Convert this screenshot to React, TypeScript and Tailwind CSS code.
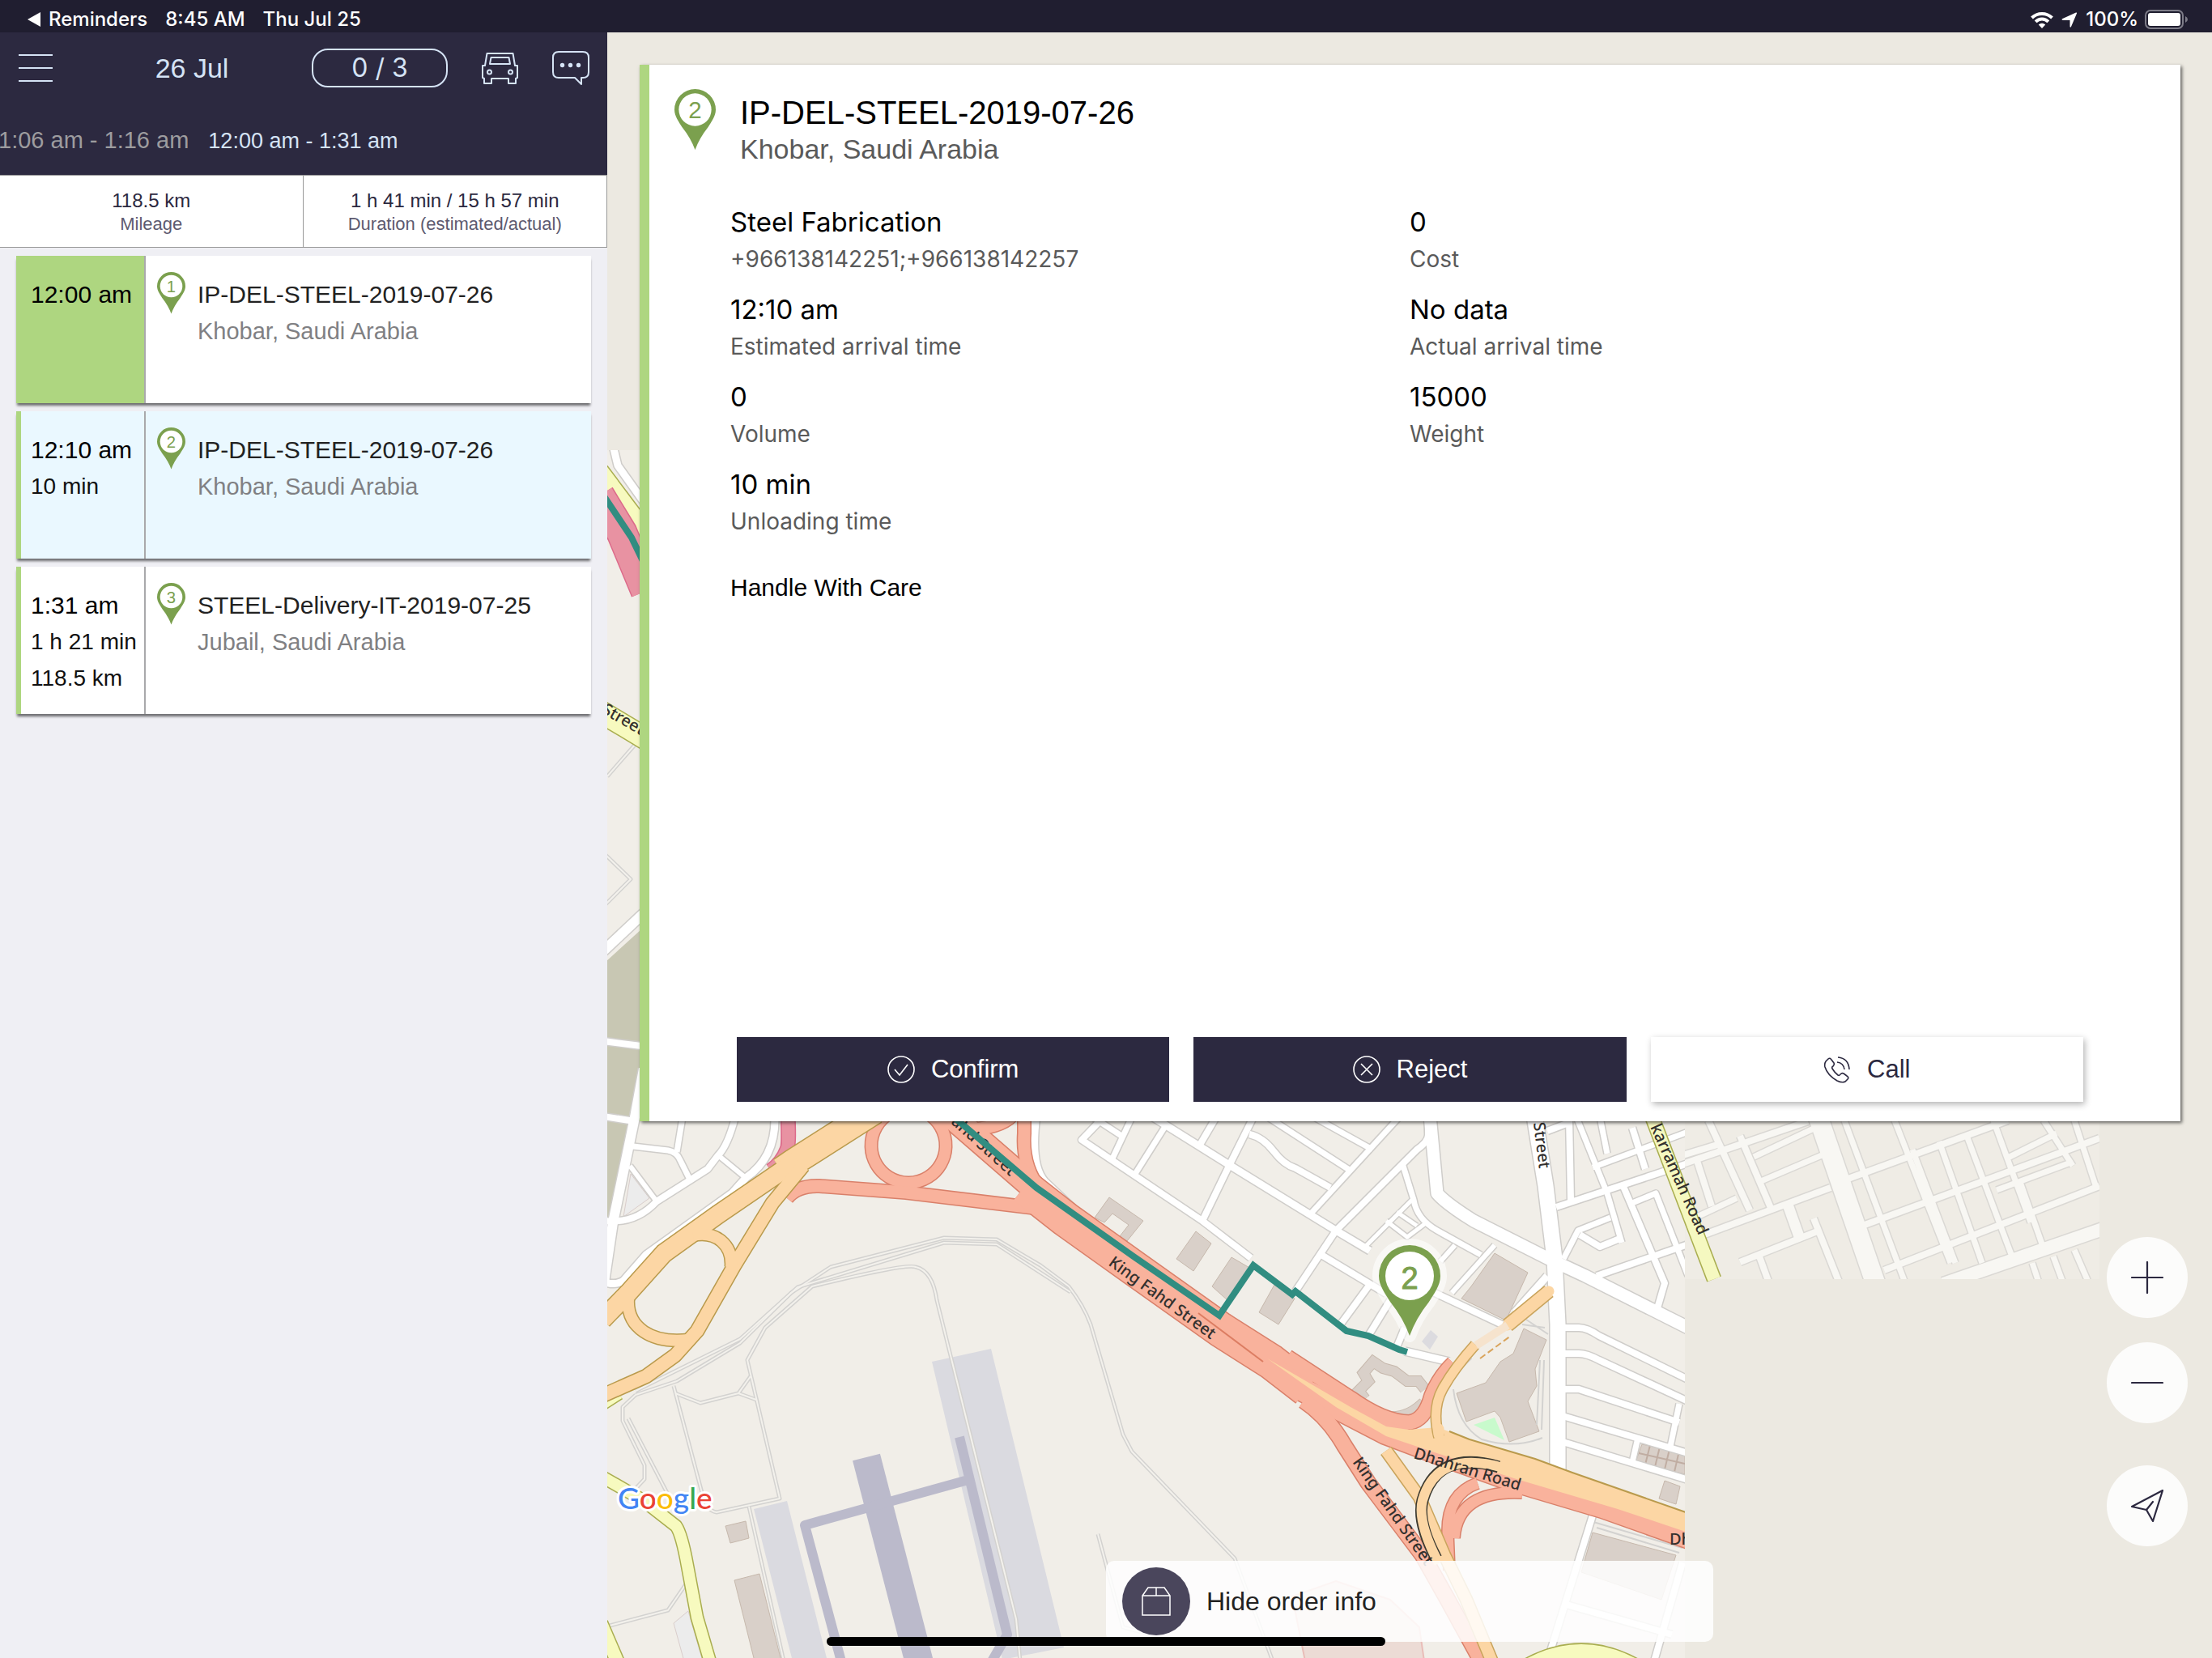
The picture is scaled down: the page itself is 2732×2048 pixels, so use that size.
import type { ReactNode } from "react";

type Stop = {
  id: number;
  time: string;
  extra: string[];
  title: string;
  place: string;
  tone: "start" | "active" | "plain";
};

const stops: Stop[] = [
  {
    id: 1,
    time: "12:00 am",
    extra: [],
    title: "IP-DEL-STEEL-2019-07-26",
    place: "Khobar, Saudi Arabia",
    tone: "start",
  },
  {
    id: 2,
    time: "12:10 am",
    extra: ["10 min"],
    title: "IP-DEL-STEEL-2019-07-26",
    place: "Khobar, Saudi Arabia",
    tone: "active",
  },
  {
    id: 3,
    time: "1:31 am",
    extra: ["1 h 21 min", "118.5 km"],
    title: "STEEL-Delivery-IT-2019-07-25",
    place: "Jubail, Saudi Arabia",
    tone: "plain",
  },
];

const details = [
  { value: "Steel Fabrication", label: "+966138142251;+966138142257" },
  { value: "0", label: "Cost" },
  { value: "12:10 am", label: "Estimated arrival time" },
  { value: "No data", label: "Actual arrival time" },
  { value: "0", label: "Volume" },
  { value: "15000", label: "Weight" },
  { value: "10 min", label: "Unloading time" },
];

export default function App() {
  return (
    <div className="min-h-screen flex flex-col bg-[#efeff4] font-['Liberation_Sans',Arial,sans-serif] text-black">
      <StatusBar />
      <div className="flex flex-1">
        <Sidebar />
        <main className="relative flex flex-1 flex-col overflow-hidden bg-[#ece9e1] pl-10 pr-[39px] pt-10">
          <MapCanvas />
          <OrderCard />
          <div className="flex-[33]" />
          <MapControls />
          <button className="absolute bottom-5 left-1/2 flex h-[100px] w-[750px] -translate-x-1/2 items-center gap-5 rounded-[10px] bg-white/85 px-5 text-[32px] text-[#222]">
            <span className="flex h-[84px] w-[84px] items-center justify-center rounded-full bg-[#4a465c]">
              <BoxIcon />
            </span>
            Hide order info
          </button>
        </main>
      </div>
      {/* Home indicator */}
      <div className="fixed bottom-[15px] left-1/2 h-[11px] w-[690px] -translate-x-1/2 rounded-full bg-black" />
    </div>
  );
}

function StatusBar() {
  return (
    <header className="flex h-10 items-center justify-between bg-[#201e30] pl-[34px] pr-[30px] pt-2 font-[Inter,sans-serif] text-[24px] leading-8 font-medium text-white">
      <div className="flex items-center gap-[22px]">
        <a href="#reminders" className="flex items-center gap-2.5">
          <svg width="16" height="18" viewBox="0 0 16 18" fill="currentColor">
            <path d="M0 9 16 0v18z" />
          </svg>
          Reminders
        </a>
        <span>8:45 AM</span>
        <span>Thu Jul 25</span>
      </div>
      <div className="flex items-center">
        <svg width="28" height="21" viewBox="0 0 28 21" fill="none" stroke="currentColor" strokeWidth="4">
          <path d="M1.500 8a18 18 0 0 1 25 0" />
          <path d="M6.200 12.800a11 11 0 0 1 15.600 0" />
          <path d="M14 21l-4.200-4.500a6 6 0 0 1 8.400 0z" fill="currentColor" stroke="none" />
        </svg>
        <svg className="ml-2.5" width="20" height="19" viewBox="0 0 20 19" fill="currentColor">
          <path d="M1 8.200 18 .6q1.400-.4 1 1L12 18q-1 1.400-1.500-.2V10H2Q-.5 9.500 1 8.200z" />
        </svg>
        <span className="ml-2.5">100%</span>
        <svg className="ml-2" width="53" height="25" viewBox="0 0 53 25" fill="none">
          <rect x="1" y="1" width="46" height="22" rx="6" stroke="#7d7c88" strokeWidth="2" />
          <rect x="4" y="4" width="40" height="16" rx="3" fill="white" />
          <path d="M50 8q3 1.500 3 4t-3 4z" fill="#7d7c88" />
        </svg>
      </div>
    </header>
  );
}

function Sidebar() {
  return (
    <aside className="w-[750px] shrink-0">
      <div className="bg-[#2c2940] text-[#d5e3f5]">
        <div className="flex h-[88px] items-center pl-[23px] pr-[22px]">
          <button aria-label="Menu">
            <svg width="42" height="34" viewBox="0 0 42 34" stroke="currentColor" strokeWidth="2">
              <path d="M0 1h42M0 17h42M0 33h42" />
            </svg>
          </button>
          <h1 className="ml-6 flex-1 text-center text-[34px]">26 Jul</h1>
          <button className="h-12 w-[168px] rounded-[20px] border-2 border-current font-[Inter,sans-serif] text-[32px] leading-none">
            0 / 3
          </button>
          <button aria-label="Vehicle" className="ml-[42px]">
            <svg width="45" height="39" viewBox="0 0 45 39" fill="none" stroke="currentColor" strokeWidth="2" strokeLinejoin="round">
              <path d="M6.500 1h32l2.500 15h3v15l-2 1v6h-9v-6h-21v6H3v-6l-2-1V16h3z" />
              <path d="M11.500 6h22l1.500 8H10z" />
              <circle cx="9.500" cy="24" r="2.500" />
              <circle cx="35.500" cy="24" r="2.500" />
            </svg>
          </button>
          <button aria-label="Messages" className="ml-[42px]">
            <svg width="46" height="42" viewBox="0 0 46 42" fill="none" stroke="currentColor" strokeWidth="2" strokeLinejoin="round">
              <path d="M8 1h30q7 0 7 7v18q0 7-7 7h-2v8l-8-8H8q-7 0-7-7V8q0-7 7-7z" />
              <g fill="currentColor" stroke="none">
                <circle cx="12.500" cy="17.500" r="2.700" />
                <circle cx="22.500" cy="17.500" r="2.700" />
                <circle cx="32.500" cy="17.500" r="2.700" />
              </g>
            </svg>
          </button>
        </div>
        <nav className="flex h-[88px] items-center gap-6 overflow-hidden whitespace-nowrap pt-1">
          <button className="-ml-0.5 text-[29px] text-[#9d9c9f]">1:06 am - 1:16 am</button>
          <button className="text-[27px]">12:00 am - 1:31 am</button>
        </nav>
      </div>

      <dl className="grid h-[90px] grid-cols-2 divide-x divide-[#999] border-y border-r border-[#999] bg-white text-center text-[#2c2940]">
        <Stat value="118.5 km" label="Mileage" />
        <Stat value="1 h 41 min / 15 h 57 min" label="Duration (estimated/actual)" />
      </dl>

      <ol className="flex flex-col gap-2.5 px-5 pt-2.5">
        {stops.map((stop) => (
          <StopCard key={stop.id} stop={stop} />
        ))}
      </ol>
    </aside>
  );
}

function Stat({ value, label }: { value: string; label: string }) {
  return (
    <div className="flex flex-col-reverse justify-center pt-0.5">
      <dt className="text-[22px] leading-7 text-[#5d5a70]">{label}</dt>
      <dd className="text-[24px] leading-[30px]">{value}</dd>
    </div>
  );
}

const tones = {
  start: { card: "bg-white", time: "bg-[#aed680]" },
  active: { card: "bg-[#eaf8ff]", time: "" },
  plain: { card: "bg-white", time: "" },
};

function StopCard({ stop }: { stop: Stop }) {
  const tone = tones[stop.tone];
  return (
    <li>
      <button
        className={`flex h-[182px] w-full border-l-6 border-[#aed680] text-left shadow-[0_4px_3px_-1px_rgba(0,0,0,0.55)] ${tone.card}`}
      >
        <div className={`h-full w-[154px] border-r-2 border-[#a9a9ab] pl-3 pt-[26px] whitespace-nowrap ${tone.time}`}>
          <p className="text-[30px] leading-[44px]">{stop.time}</p>
          {stop.extra.map((line) => (
            <p key={line} className="text-[28px] leading-[45px] text-[#111]">
              {line}
            </p>
          ))}
        </div>
        <div className="flex gap-[15px] pl-[14px] pt-5">
          <Pin n={stop.id} className="w-[35px]" />
          <div className="pt-1.5">
            <p className="text-[30px] leading-[44px] text-[#222]">{stop.title}</p>
            <p className="text-[29px] leading-[46px] text-[#808083]">{stop.place}</p>
          </div>
        </div>
      </button>
    </li>
  );
}

function OrderCard() {
  return (
    <article className="relative flex flex-[65] flex-col border-l-12 border-[#aed680] bg-white shadow-[2px_2px_4px_rgba(0,0,0,0.6)]">
      <header className="flex gap-[30px] pl-[31px] pt-[30px]">
        <Pin n={2} className="w-[51px]" />
        <div className="pt-1.5">
          <h2 className="text-[40px] leading-[46px]">IP-DEL-STEEL-2019-07-26</h2>
          <p className="text-[34px] leading-[44px] text-[#5a5a5a]">Khobar, Saudi Arabia</p>
        </div>
      </header>
      <dl className="mt-[46px] grid grid-cols-2 gap-y-4 pl-[100px] pr-[113px] font-[Inter,sans-serif]">
        {details.map((item) => (
          <div key={item.label} className="flex flex-col-reverse">
            <dt className="text-[28px] leading-[48px] text-[#5a5a5a]">{item.label}</dt>
            <dd className="text-[33px] leading-[44px]">{item.value}</dd>
          </div>
        ))}
      </dl>
      <p className="mt-9 pl-[100px] text-[30px] leading-[44px]">Handle With Care</p>
      <div className="mb-6 mt-auto grid grid-cols-3 gap-[30px] pl-[108px] pr-[120px]">
        <ActionButton className="bg-[#2c2940] text-white" label="Confirm">
          <circle cx="17" cy="17" r="16" />
          <path d="m9 17 6 7L25 11" />
        </ActionButton>
        <ActionButton className="bg-[#2c2940] text-white" label="Reject">
          <circle cx="17" cy="17" r="16" />
          <path d="m10 10 14 14M24 10 10 24" />
        </ActionButton>
        <ActionButton className="bg-white text-[#2c2940] shadow-[2px_3px_8px_rgba(0,0,0,0.3)]" label="Call">
          <path d="M3 7 6 4q2-2 4 1l3 4q1 2-1 4-2 1-1 3 3 5 7 8 2 1 3-1 2-2 4-1l4 3q3 2 1 4l-3 3q-4 2-10-1Q5 24 2 14q-1-4 1-7z" />
          <path d="M18 2q13 1 14 15M17 8q8 1 9 9" />
        </ActionButton>
      </div>
    </article>
  );
}

function ActionButton({
  label,
  className,
  children,
}: {
  label: string;
  className: string;
  children: ReactNode;
}) {
  return (
    <button className={`flex h-20 items-center justify-center gap-5 text-[31px] ${className}`}>
      <svg width="34" height="34" viewBox="0 0 34 34" fill="none" stroke="currentColor" strokeWidth="1.600">
        {children}
      </svg>
      {label}
    </button>
  );
}

function MapControls() {
  return (
    <div className="absolute bottom-[138px] right-[30px] flex flex-col gap-[30px] text-[#2c2940]">
      <RoundButton label="Zoom in">
        <path d="M20 1v38M1 20h38" />
      </RoundButton>
      <RoundButton label="Zoom out">
        <path d="M1 20h38" />
      </RoundButton>
      <div className="mt-[22px] flex">
        <RoundButton label="My location">
          <path d="M1 21 39 1 27 39l-8-14zM19 25l8-10" />
        </RoundButton>
      </div>
    </div>
  );
}

function RoundButton({ label, children }: { label: string; children: ReactNode }) {
  return (
    <button aria-label={label} className="flex h-[100px] w-[100px] items-center justify-center rounded-full bg-white/85">
      <svg width="40" height="40" viewBox="0 0 40 40" fill="none" stroke="currentColor" strokeWidth="2.200" strokeLinecap="round" strokeLinejoin="round">
        {children}
      </svg>
    </button>
  );
}

function BoxIcon() {
  return (
    <svg width="36" height="36" viewBox="0 0 36 36" fill="none" stroke="white" strokeWidth="1.500">
      <path d="M1 11 8 1h20l7 10v24H1zM1 11h34M18 1v10" />
    </svg>
  );
}

function Pin({ n, className }: { n: number; className: string }) {
  return (
    <svg viewBox="0 0 38 56" className={`shrink-0 self-start ${className}`}>
      <PinBody />
      <text x="19" y="27" textAnchor="middle" fontSize="22" fill="#7ba04e">
        {n}
      </text>
    </svg>
  );
}

function PinBody() {
  return (
    <>
      <path d="M19 0a19 19 0 0 1 19 19c0 6-4 11-7 16q-8 10-12 21-4-11-12-21c-3-5-7-10-7-16A19 19 0 0 1 19 0z" fill="#7ba04e" />
      <circle cx="19" cy="19" r="15" fill="white" />
    </>
  );
}

/* ---------- Map ---------- */

type Line = [d: string, width: number];

const streets: Line[] = [
  // west side
  ["M757 550L763 575L795 620", 9],
  ["M745 1175L795 1128", 12],
  ["M745 1286L800 1293", 8],
  ["M745 1379L784 1385", 8],
  ["M795 1320L784 1380L757 1510L746 1584", 12],
  ["M782 1416L825 1421Q836 1423 840 1433L852 1457", 7],
  ["M843 1380L836 1423", 7],
  ["M908 1380Q899 1415 887 1427L874 1444L811 1484Q785 1512 748 1508", 8],
  ["M957 1380Q958 1430 921 1455L904 1474L798 1550L770 1582Q760 1588 748 1584", 9],
  ["M887 1427L921 1455M778 1440L811 1484", 6],
  // centre
  ["M1278 1378Q1270 1440 1289 1461L1325 1495", 13],
  ["M1363 1380L1336 1408L1485 1508L1545 1554", 8],
  ["M1350 1380L1385 1403M1398 1380L1374 1431M1438 1393L1402 1450", 7],
  ["M1424 1380L1520 1440L1650 1520L1692 1545", 9],
  ["M1548 1380L1518 1440L1485 1508M1502 1380L1482 1414", 8],
  ["M1543 1401Q1560 1405 1573 1422T1600 1443L1643 1467", 8],
  ["M1566 1380L1668 1446M1623 1380L1695 1420", 7],
  ["M1728 1380L1619 1499", 7],
  ["M1764 1380V1402Q1764 1410 1750 1420L1650 1520L1600 1595", 8],
  ["M1766 1378L1775 1474Q1785 1486 1820 1508L1913 1555L1958 1576L2085 1640", 15],
  ["M1733 1440L1746 1482Q1750 1506 1775 1520L1829 1550", 7],
  ["M1744 1482L1686 1540M1712 1508L1738 1528L1762 1510M1725 1497L1750 1514", 5],
  ["M1632 1550L1712 1598M1690 1589L1657 1634M1717 1606L1690 1650M1735 1640L1725 1664", 8],
  ["M1770 1596L1855 1636", 8],
  ["M1846 1538L1793 1597M1797 1538L1779 1558", 6],
  ["M1735 1669L1790 1682M1911 1576L1871 1621M1796 1692L1814 1674", 9],
  ["M1895 1378L1909 1465L1920 1555L1924 1636V1825", 19],
  // east side
  ["M1930 1640H1950Q1960 1640 1975 1650L2085 1704", 8],
  ["M1930 1672H1950Q1960 1672 1975 1680L2085 1731", 8],
  ["M1930 1716H1950L2074 1757M1930 1749L2085 1795M1930 1781L2085 1828", 8],
  ["M2074 1734L2063 1787M2023 1776L2016 1806", 7],
  ["M1922 1491L2085 1437M1911 1397L1940 1386M1938 1380L1940 1482", 8],
  ["M1947 1380L1985 1474L2003 1535M1976 1380L1985 1425M1967 1442L2085 1398", 7],
  ["M2016 1393L2032 1444M2003 1461L2056 1585L2047 1616", 8],
  ["M2016 1486L2045 1474L2085 1576M1931 1555L1949 1520L1989 1504", 7],
  ["M1951 1525L1976 1540L2003 1529M1972 1576L2085 1537", 8],
  ["M1967 1872L1911 2052M2078 1930L2043 2052M1931 1981L2065 2019", 8],
];

const fadedStreets: Line[] = [
  ["M2245 1378L2318 1590", 24],
  ["M2075 1439L2233 1385M2075 1428L2121 1414", 8],
  ["M2110 1384L2161 1495M2149 1403L2187 1492M2096 1434L2114 1490", 8],
  ["M2166 1429L2240 1394M2175 1459L2250 1427M2096 1503L2145 1480", 7],
  ["M2089 1531L2261 1467M2149 1559L2247 1520M2240 1505L2273 1588M2173 1552L2186 1588", 8],
  ["M2208 1488L2224 1533", 13],
  ["M2280 1457L2480 1384M2303 1513L2593 1406M2327 1569L2593 1465", 8],
  ["M2400 1586L2600 1517", 16],
  ["M2278 1384L2355 1590M2340 1384L2409 1560M2362 1420L2415 1560M2395 1410L2448 1560M2428 1400L2488 1560", 7],
  ["M2462 1384L2508 1510M2495 1460L2525 1545M2524 1384L2560 1440M2562 1384L2590 1470M2480 1430L2540 1400", 7],
  ["M2510 1560L2520 1590M2536 1552L2550 1590M2562 1544L2582 1590M2466 1470L2560 1435", 7],
];

const tracks = [
  "M785 1723L836 1706L914 1659L977 1597L1026 1565L1166 1529L1231 1531L1285 1563L1320 1589Q1338 1612 1347 1636L1387 1772L1398 1793L1525 1925L1572 2052",
  "M785 1718L914 1654L985 1590L1166 1535L1231 1537L1322 1596",
  "M1260 2052L1255 2000L1157 1606Q1152 1570 1131 1565Q1120 1560 1003 1589L945 1640L923 1680L963 1851L885 1868Q872 1866 867 1844L832 1712",
  "M834 1721L865 1733L912 1721L934 1729M912 1721L927 1700",
  "M785 1723L769 1738V1755L796 1810V1827L782 1842M776 1752L825 1846",
  "M925 1861L968 2052M753 2008L825 1989L847 1957M1356 1895L1387 2010L1425 2020",
  "M750 959L785 919M748 1056L779 1086L748 1117",
];

const buildings = [
  "896,1885 921,1879 925,1900 902,1906",
  "907,1952 938,1944 965,2052 932,2052",
  "1370,1479 1412,1508 1392,1533 1383,1527 1394,1513 1374,1499 1364,1510 1352,1504",
  "1477,1521 1496,1536 1474,1570 1453,1555",
  "1521,1553 1545,1567 1516,1606 1497,1589",
  "1574,1587 1599,1604 1579,1636 1555,1621",
  "1846,1548 1887,1572 1860,1631 1805,1604 1817,1589",
  "1882,1641 1910,1655 1896,1691 1898,1712 1887,1731 1901,1768 1864,1781 1853,1751 1846,1743 1811,1756 1799,1721 1835,1708 1853,1682 1869,1672",
  "2028,1784 2081,1795 2081,1821 2020,1806",
  "2056,1829 2075,1836 2070,1858 2049,1851",
  "1967,1893 2070,1921 2052,1976 1953,1942",
];

const yellowRoads: Line[] = [
  ["M740 580L800 660", 20],
  ["M740 878L800 914", 26],
  ["M740 1738L765 1722", 12],
  ["M740 1822L794 1853L835 1885Q842 1895 849 1934L861 1998L878 2056", 14],
  ["M742 2005L764 2056", 16],
  ["M1880 2062Q1953 2018 2026 2062", 18],
];

const pinkRoads: Line[] = [
  ["M740 612L768 658L798 730", 36],
  ["M973 1378Q975 1415 972 1420Q966 1436 952 1446", 16],
];

const orangeRoads: Line[] = [
  ["M1080 1372L981 1435L965 1446", 32],
  ["M985 1433L887 1500L820 1548L776 1597L744 1630", 22],
  ["M992 1440L954 1486L907 1563L861 1644L834 1674L798 1700L744 1724", 16],
  ["M856 1526C885 1520 905 1538 903 1565M776 1605C774 1640 805 1660 850 1655", 14],
];

const salmonRoads: Line[] = [
  ["M1122 1369a46 46 0 1 0 .1 0z", 14],
  ["M972 1480Q985 1464 1012 1465L1119 1473L1285 1493", 15],
  ["M1265 1375V1400Q1262 1440 1285 1470M1190 1396Q1235 1394 1250 1378", 15],
  ["M1165 1370L1271 1462L1290 1482", 30],
  ["M1265 1466L1316 1506L1400 1566L1507 1642L1570 1682L1614 1716", 42],
  ["M1590 1676L1668 1727Q1710 1757 1741 1757Q1760 1754 1768 1724Q1778 1700 1795 1684", 17],
  ["M1600 1712L1712 1770L1802 1804L1869 1828L1980 1861L2090 1900", 28],
  ["M1610 1730Q1640 1750 1660 1785L1690 1832L1757 1921L1788 1976L1834 2060", 18],
  ["M1825 1832Q1788 1845 1788 1891L1790 1940M1880 1844Q1800 1840 1796 1900", 13],
];

const orangeOver: Line[] = [
  ["M1777 1775Q1768 1740 1782 1715T1822 1661", 11],
  ["M1862 1637L1913 1595", 15],
  ["M1712 1792L1753 1849L1784 1921L1811 1976L1846 2060", 14],
];

type MapText = { text: string; x: number; y: number; angle: number };

const labels: MapText[] = [
  { text: "Street", x: 742, y: 880, angle: 30 },
  { text: "Fahd Street", x: 1166, y: 1380, angle: 42 },
  { text: "King Fahd Street", x: 1368, y: 1562, angle: 36 },
  { text: "King Fahd Street", x: 1670, y: 1806, angle: 55 },
  { text: "Dhahran Road", x: 1745, y: 1801, angle: 17 },
  { text: "Street", x: 1894, y: 1387, angle: 83 },
  { text: "karramah Road", x: 2038, y: 1392, angle: 66 },
];

function Roads({ lines, fill, casing }: { lines: Line[]; fill: string; casing: string }) {
  return (
    <g fill="none">
      {lines.map(([d, w]) => (
        <path key={d} d={d} stroke={casing} strokeWidth={w + 3} />
      ))}
      {lines.map(([d, w]) => (
        <path key={d} d={d} stroke={fill} strokeWidth={w} />
      ))}
    </g>
  );
}

function MapCanvas() {
  return (
    <svg
      className="absolute inset-0 h-full w-full font-['Noto_Sans',sans-serif]"
      viewBox="750 40 1982 2008"
      preserveAspectRatio="xMinYMin slice"
      strokeLinejoin="round"
    >
      <defs>
        <clipPath id="tiles">
          <path d="M750 556H2081V2048H750z" />
        </clipPath>
        <clipPath id="faded">
          <path d="M2081 556H2593V1580H2081z" />
        </clipPath>
      </defs>

      <g clipPath="url(#faded)">
        <path d="M2081 556H2593V1580H2081z" fill="#efece5" />
        <Roads lines={fadedStreets} fill="#f8f7f3" casing="#dad8d4" />
      </g>

      <g clipPath="url(#tiles)">
        <path d="M750 556H2081V2048H750z" fill="#f1eee8" />
        <path d="M748 1188L792 1148V1320L778 1397L748 1520z" fill="#c8c7b3" />
        <path d="M779 1450L802 1480L770 1503z" fill="#ececec" stroke="#d9cdcb" />
        <path d="M845 2052L832 2005L850 1990L868 2052z" fill="#ececec" stroke="#d9cdcb" />
        <path d="M1596 1972L1650 1953L1717 1976L1753 2010L1759 2052H1612z" fill="#ecdbd5" stroke="#e9bdb8" strokeWidth="2" />

        {/* Airfield */}
        <path d="M1151 1682L1224 1666L1314 2035L1238 2050zM931 1864L972 1854L1022 2052H979z" fill="#dadae0" />
        <g fill="none" stroke="#bbbacb">
          <path d="M1070 1800L1136 2056" strokeWidth="35" />
          <path d="M1040 2056L994 1884L1192 1829M1185 1775L1244 2019L1225 2052" strokeWidth="12" />
        </g>
        <g fill="none">
          {tracks.map((d) => (
            <path key={d} d={d} stroke="#d3d2d0" strokeWidth="5" />
          ))}
          {tracks.map((d) => (
            <path key={d} d={d} stroke="#f3f1ec" strokeWidth="2" />
          ))}
        </g>

        <g fill="#d9d0c9" stroke="#c6b8ac">
          {buildings.map((points) => (
            <polygon key={points} points={points} />
          ))}
        </g>
        <path d="M2024 1795L2081 1808M2038 1785L2032 1809M2050 1787L2044 1812M2062 1790L2056 1815M2074 1792L2068 1818" stroke="#c0ada2" strokeWidth="2" />
        <g fill="none" stroke="#c6b8ac">
          <path d="M1674 1731Q1722 1768 1758 1732" strokeWidth="13" />
          <path d="M1674 1731Q1722 1768 1758 1732" strokeWidth="11" stroke="#d9d0c9" />
          <path d="M1686 1728L1678 1718L1690 1706L1684 1696L1696 1682L1708 1690L1722 1694L1738 1706L1752 1706L1760 1716" strokeWidth="14" strokeLinejoin="miter" />
          <path d="M1686 1728L1678 1718L1690 1706L1684 1696L1696 1682L1708 1690L1722 1694L1738 1706L1752 1706L1760 1716" strokeWidth="12" stroke="#d9d0c9" strokeLinejoin="miter" />
        </g>
        <path d="M1820 1760L1846 1751L1858 1779z" fill="#c8facc" />
        <path d="M1756 1657L1767 1643L1776 1651L1766 1667z" fill="#dcdbdf" />
        <path d="M1795 1716Q1800 1760 1830 1778Q1870 1790 1905 1776M1885 1630L1912 1648M1880 1636L1908 1640M1902 1680L1898 1760M1907 1680L1904 1766M1968 1880L2078 1912M1972 1887L2074 1918" fill="none" stroke="#d3d2d0" strokeWidth="2" />

        <Roads lines={streets} fill="#ffffff" casing="#cfcdca" />
        <Roads lines={yellowRoads} fill="#f7fabf" casing="#a9ad4f" />
        <Roads lines={pinkRoads} fill="#e892a2" casing="#dc6a8a" />
        <Roads lines={salmonRoads} fill="#f9b29c" casing="#d9806a" />
        <Roads lines={orangeRoads} fill="#fcd6a4" casing="#b99a4c" />
        <path d="M1565 1678L1668 1738L1712 1762L1740 1766L1775 1763Q1800 1772 1815 1778L1896 1802L1942 1819L2085 1869V1893L1998 1864L1873 1827L1820 1810L1712 1774L1650 1738z" fill="#fcd6a4" />
        <path d="M1790 1768L1815 1778L1896 1802L1942 1819L2085 1869" fill="none" stroke="#b99a4c" strokeWidth="2" />
        <Roads lines={orangeOver} fill="#fcd6a4" casing="#c9a45c" />
        <path d="M1862 1637L1913 1595M1777 1772V1765" fill="none" stroke="#fcd6a4" strokeWidth="13" strokeLinecap="round" />
        <path d="M1823 1662L1862 1637" stroke="#f6e3cd" strokeWidth="10" />
        <path d="M1828 1678L1866 1650" stroke="#d9a45c" strokeWidth="2" strokeDasharray="8 4" />
        <path d="M1851 1812Q1775 1790 1757 1853Q1750 1880 1774 1925" fill="none" stroke="#3c3a30" strokeWidth="15" />
        <path d="M1856 1813Q1775 1790 1757 1853Q1750 1880 1777 1931" fill="none" stroke="#fcd6a4" strokeWidth="12" />
        <path d="M1480 1622L1560 1682" stroke="#dc7d62" strokeWidth="2" />
      </g>

      {/* Runs across the seam between the two tiles */}
      <path d="M2039 1376L2117 1580" stroke="#a9ad4f" strokeWidth="19" />
      <path d="M2039 1376L2117 1580" stroke="#f5f8c0" strokeWidth="16" />

      <g fontSize="20" fontWeight="500" fill="#33302e">
        {labels.map((l) => (
          <text key={`${l.x}-${l.y}`} x={l.x} y={l.y} transform={`rotate(${l.angle} ${l.x} ${l.y})`}>
            {l.text}
          </text>
        ))}
        <text x="2062" y="1908" clipPath="url(#tiles)">
          Dh
        </text>
      </g>

      {/* Planned route */}
      <g fill="none" stroke="#318d81" strokeWidth="8" strokeLinejoin="miter" clipPath="url(#tiles)">
        <path d="M740 604L780 664L795 695" />
        <path d="M1176 1378L1280 1467L1400 1552L1506 1625L1548 1563L1596 1599L1600 1595L1663 1644L1690 1650L1728 1667L1738 1670" />
      </g>

      {/* Current stop */}
      <g transform="translate(1703 1538) scale(2)">
        <path
          d="M19 0a19 19 0 0 1 19 19c0 6-4 11-7 16q-8 10-12 21-4-11-12-21c-3-5-7-10-7-16A19 19 0 0 1 19 0z"
          fill="white"
          stroke="white"
          strokeWidth="8"
          opacity=".6"
        />
        <PinBody />
      </g>
      <text x="1741" y="1592" textAnchor="middle" fontSize="38" fill="#7ba04e" stroke="#7ba04e" className="font-['Liberation_Sans']">
        2
      </text>

      <text
        x="763"
        y="1864"
        fontSize="37"
        stroke="white"
        strokeWidth="6"
        paintOrder="stroke"
        className="font-[Lato,sans-serif] font-medium"
      >
        <tspan fill="#4285f4">G</tspan>
        <tspan fill="#ea4335">o</tspan>
        <tspan fill="#fbbc05">o</tspan>
        <tspan fill="#4285f4">g</tspan>
        <tspan fill="#34a853">l</tspan>
        <tspan fill="#ea4335">e</tspan>
      </text>
    </svg>
  );
}
